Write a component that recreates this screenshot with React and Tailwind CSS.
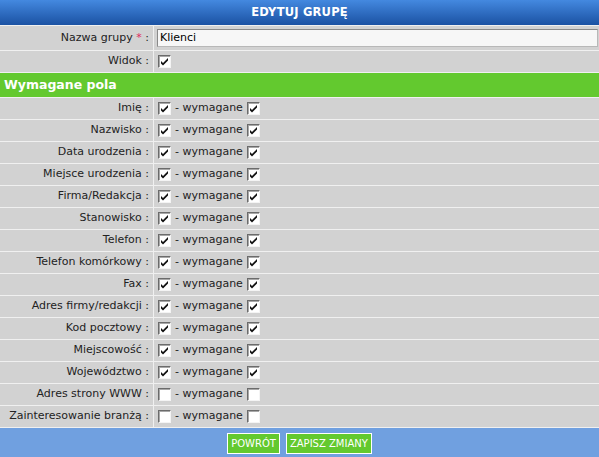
import React from "react";

const font = { fontFamily: "'DejaVu Sans', Verdana, sans-serif" };
const bold = { fontFamily: "'DejaVu Sans', Verdana, sans-serif" };

function Check({ checked }) {
  return (
    <span className="inline-flex w-[13px] h-[13px] items-center justify-center bg-white border border-t-[#6b6b6b] border-l-[#6b6b6b] border-b-[#f4f4f4] border-r-[#f4f4f4] shadow-[inset_1px_1px_0_#a8a8a8]">
      {checked && (
        <svg width="9" height="9" viewBox="0 0 9 9">
          <path d="M1 4 L3 6 L8 1 L8 3.5 L3 8.5 L1 6.5 Z" fill="#111" />
        </svg>
      )}
    </span>
  );
}

const fields = [
  ["Imię", true],
  ["Nazwisko", true],
  ["Data urodzenia", true],
  ["Miejsce urodzenia", true],
  ["Firma/Redakcja", true],
  ["Stanowisko", true],
  ["Telefon", true],
  ["Telefon komórkowy", true],
  ["Fax", true],
  ["Adres firmy/redakcji", true],
  ["Kod pocztowy", true],
  ["Miejscowość", true],
  ["Województwo", true],
  ["Adres strony WWW", false],
  ["Zainteresowanie branżą", false],
];

function Row({ label, children, h = "h-[21px]" }) {
  return (
    <div className={`grid grid-cols-[153px_1fr] gap-px ${h}`}>
      <div className="bg-[#d2d2d2] flex items-center justify-end pr-[4px] text-[11px] text-[#222] whitespace-nowrap">
        {label}
      </div>
      <div className="bg-[#d2d2d2] flex items-center pl-[4px] text-[11px] text-[#222] whitespace-nowrap">
        {children}
      </div>
    </div>
  );
}

export default function App() {
  return (
    <div className="w-[599px] h-[457px] overflow-hidden bg-[#f0f0f0] flex flex-col gap-px" style={font}>
      <div className="h-[25px] shrink-0 bg-gradient-to-b from-[#4489e0] to-[#1b52a3] flex items-center justify-center text-white font-bold text-[11.5px] tracking-[0.2px]" style={bold}>
        EDYTUJ GRUPĘ
      </div>
      <Row
        h="h-[24px]"
        label={
          <span>
            Nazwa grupy <span className="text-[#e0245e]">*</span> :
          </span>
        }
      >
        <div className="w-full h-[18px] bg-[#f7f7f7] border border-t-[#8a8a8a] border-l-[#8a8a8a] border-b-[#b8b8b8] border-r-[#b8b8b8] flex items-center pl-[2px] text-[11px] text-black -ml-[1px]">
          Klienci
        </div>
      </Row>
      <Row label="Widok :">
        <Check checked />
      </Row>
      <div className="h-[24px] shrink-0 bg-[#63c92f] flex items-center pl-[4px] text-white font-bold text-[12.5px]" style={bold}>
        Wymagane pola
      </div>
      {fields.map(([name, c]) => (
        <Row key={name} label={`${name} :`}>
          <Check checked={c} />
          <span className="ml-[4px] mr-[4px]">- wymagane</span>
          <Check checked={c} />
        </Row>
      ))}
      <div className="flex-1 bg-[#70a0e0] flex justify-center items-start pt-[5px] gap-[6px]">
        <button className="h-[21px] px-[3px] bg-[#63c92f] border border-white text-white text-[10px] uppercase" style={bold}>
          Powrót
        </button>
        <button className="h-[21px] px-[3px] bg-[#63c92f] border border-white text-white text-[10px] uppercase" style={bold}>
          Zapisz zmiany
        </button>
      </div>
    </div>
  );
}
